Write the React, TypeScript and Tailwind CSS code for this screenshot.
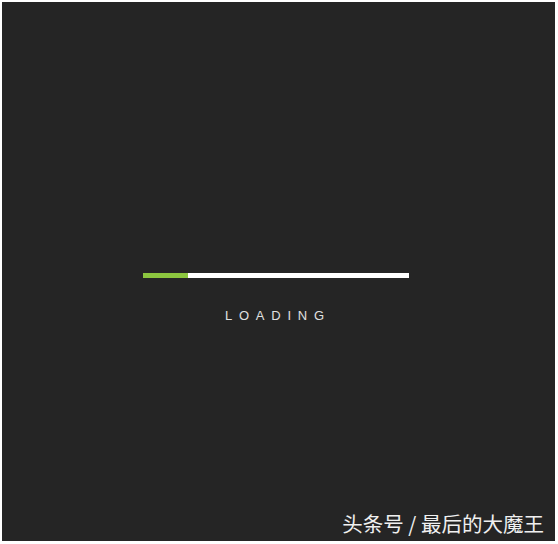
export default function App() {
  const progress = 17

  return (
    <div className="w-[558px] h-[544px] bg-white pt-[2px] pl-[2px] pr-[3px] pb-[3px]">
      <div className="relative w-full h-full bg-[#252525] flex flex-col">
        {/* Progress bar */}
        <div className="mt-[271px] ml-[141px] w-[266px] h-[5px] bg-white">
          <div className="h-full bg-[#8cc63f]" style={{ width: `${progress}%` }} />
        </div>

        {/* Label */}
        <div
          className="mt-[30px] ml-[223px] text-[13px] leading-[16px] tracking-[0.52em] text-[#e0e0e0]"
          style={{ fontFamily: '"Liberation Sans", Arial, sans-serif' }}
        >
          LOADING
        </div>

        {/* Watermark */}
        <div
          className="mt-auto mb-[4px] self-end mr-[11px] text-[20.5px] leading-[28px] text-[#f0f0f0]"
          style={{ fontFamily: '"Noto Sans CJK SC", "Liberation Sans", sans-serif' }}
        >
          头条号 / 最后的大魔王
        </div>
      </div>
    </div>
  )
}
